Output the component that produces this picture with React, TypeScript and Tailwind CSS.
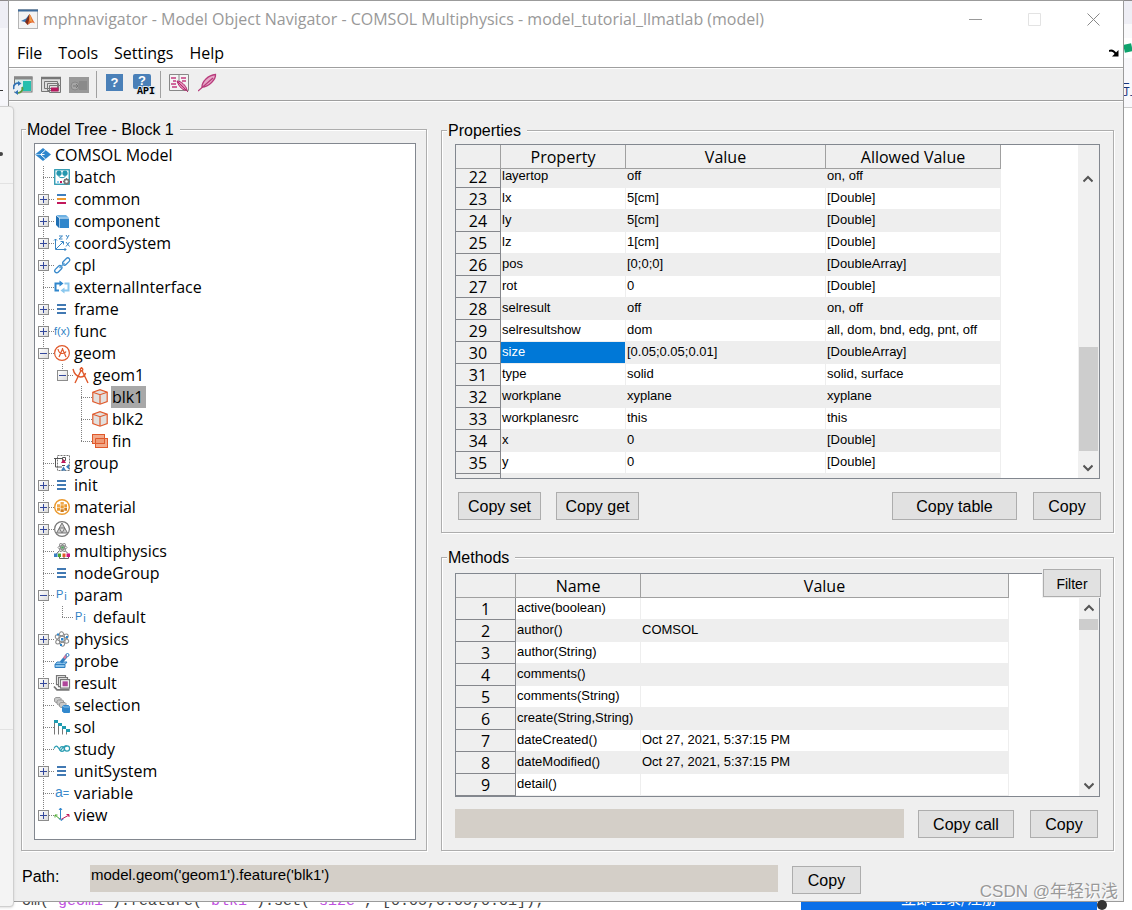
import React from 'react'

type NodeType = {
  name: string
  icon: string
  depth: number
  toggle?: 'plus' | 'minus'
  last?: boolean
  selected?: boolean
}

const tree: NodeType[] = [
  { name: 'batch', icon: 'batch', depth: 1 },
  { name: 'common', icon: 'common', depth: 1, toggle: 'plus' },
  { name: 'component', icon: 'component', depth: 1, toggle: 'plus' },
  { name: 'coordSystem', icon: 'coord', depth: 1, toggle: 'plus' },
  { name: 'cpl', icon: 'link', depth: 1, toggle: 'plus' },
  { name: 'externalInterface', icon: 'external', depth: 1 },
  { name: 'frame', icon: 'list', depth: 1, toggle: 'plus' },
  { name: 'func', icon: 'func', depth: 1, toggle: 'plus' },
  { name: 'geom', icon: 'geom', depth: 1, toggle: 'minus' },
  { name: 'geom1', icon: 'geom1', depth: 2, toggle: 'minus', last: true },
  { name: 'blk1', icon: 'block', depth: 3, selected: true },
  { name: 'blk2', icon: 'block', depth: 3 },
  { name: 'fin', icon: 'fin', depth: 3, last: true },
  { name: 'group', icon: 'group', depth: 1 },
  { name: 'init', icon: 'list', depth: 1, toggle: 'plus' },
  { name: 'material', icon: 'material', depth: 1, toggle: 'plus' },
  { name: 'mesh', icon: 'mesh', depth: 1, toggle: 'plus' },
  { name: 'multiphysics', icon: 'multi', depth: 1 },
  { name: 'nodeGroup', icon: 'list', depth: 1 },
  { name: 'param', icon: 'param', depth: 1, toggle: 'minus' },
  { name: 'default', icon: 'param', depth: 2, last: true },
  { name: 'physics', icon: 'physics', depth: 1, toggle: 'plus' },
  { name: 'probe', icon: 'probe', depth: 1 },
  { name: 'result', icon: 'result', depth: 1, toggle: 'plus' },
  { name: 'selection', icon: 'selection', depth: 1 },
  { name: 'sol', icon: 'sol', depth: 1 },
  { name: 'study', icon: 'study', depth: 1 },
  { name: 'unitSystem', icon: 'list', depth: 1, toggle: 'plus' },
  { name: 'variable', icon: 'variable', depth: 1 },
  { name: 'view', icon: 'view', depth: 1, toggle: 'plus', last: true },
]

const properties = [
  ['22', 'layertop', 'off', 'on, off'],
  ['23', 'lx', '5[cm]', '[Double]'],
  ['24', 'ly', '5[cm]', '[Double]'],
  ['25', 'lz', '1[cm]', '[Double]'],
  ['26', 'pos', '[0;0;0]', '[DoubleArray]'],
  ['27', 'rot', '0', '[Double]'],
  ['28', 'selresult', 'off', 'on, off'],
  ['29', 'selresultshow', 'dom', 'all, dom, bnd, edg, pnt, off'],
  ['30', 'size', '[0.05;0.05;0.01]', '[DoubleArray]'],
  ['31', 'type', 'solid', 'solid, surface'],
  ['32', 'workplane', 'xyplane', 'xyplane'],
  ['33', 'workplanesrc', 'this', 'this'],
  ['34', 'x', '0', '[Double]'],
  ['35', 'y', '0', '[Double]'],
]

const methods = [
  ['1', 'active(boolean)', ''],
  ['2', 'author()', 'COMSOL'],
  ['3', 'author(String)', ''],
  ['4', 'comments()', ''],
  ['5', 'comments(String)', ''],
  ['6', 'create(String,String)', ''],
  ['7', 'dateCreated()', 'Oct 27, 2021, 5:37:15 PM'],
  ['8', 'dateModified()', 'Oct 27, 2021, 5:37:15 PM'],
  ['9', 'detail()', ''],
]

const getNodeIcon = (icon: string) => {
  switch (icon) {
    case 'model':
      return (
        <>
          <path d="M0 7.500 8 1l8 6.500L8 14Z" fill="#2f86cc" />
          <path d="M10.500 3 5.500 7.500l5 4.500M5.500 7.500h4" stroke="#fff" fill="none" />
          <path d="M0 7.500h5" stroke="#9cc8ea" />
        </>
      )
    case 'batch':
      return (
        <>
          <rect x="0.750" y="0.750" width="14.500" height="14.500" fill="#fff" stroke="#2596ae" strokeWidth="1.300" />
          <circle cx="5" cy="4.200" r="2.600" fill="#2596ae" />
          <circle cx="11" cy="4.200" r="2.600" fill="#2596ae" />
          <path d="M5 6v1.500c0 1.500 6 1.500 6 0V6" fill="none" stroke="#2596ae" />
          <path d="M3 13h2" stroke="#8bc8ee" strokeWidth="2" />
          <path d="M6 13h2" stroke="#c2185b" strokeWidth="2" />
          <circle cx="12.500" cy="12.500" r="2.200" fill="#fff" stroke="#777" strokeWidth="1.800" />
          <path d="M12.500 9v1M12.500 15v1M9 12.500h1M15 12.500h1M10 10l1 1M14 14l1 1M15 10l-1 1M11 14l-1 1" stroke="#777" />
        </>
      )
    case 'common':
      return (
        <>
          <path d="M3 4h9" stroke="#3f7fbf" strokeWidth="2" />
          <path d="M3 8h9" stroke="#ee9a2e" strokeWidth="2" />
          <path d="M3 12h9" stroke="#c2185b" strokeWidth="2" />
        </>
      )
    case 'list':
      return <path d="M3 4h9M3 8h9M3 12h9" stroke="#4179b3" strokeWidth="2" />
    case 'component':
      return (
        <>
          <path d="M2 2.500 5 5v10L2 12Z" fill="#1e6fb4" />
          <path d="M5.500 5.500H15V15H5.500Z" fill="#3187cc" />
          <path d="M2.500 2h9.500l3 2.700H5.500Z" fill="#6eb2e4" />
        </>
      )
    case 'coord':
      return (
        <g fill="none" stroke="#3a86c4">
          <path d="M1.500 4v10.500H12M0 5.500 1.500 4 3 5.500M10.500 13l1.500 1.500-1.500 1.500M2 14 9 7M6.500 6.500h3v3" />
          <path d="M5 1h3.500L5 4h3.500M12 0l1.500 2.300M15 0l-2.500 4.500M12 7l3.500 4.500M15.500 7 12 11.500" />
        </g>
      )
    case 'link':
      return (
        <g fill="none" strokeWidth="1.300">
          <rect x="8" y="2.700" width="8.500" height="4" rx="2" transform="rotate(-45 12 4.700)" stroke="#3a8acb" />
          <rect x="0" y="10" width="8.500" height="4" rx="2" transform="rotate(-45 4.500 12)" stroke="#3a8acb" />
          <path d="m5.500 11 5-5" stroke="#5ea3d8" strokeWidth="1.500" />
        </g>
      )
    case 'external':
      return (
        <g fill="none" strokeWidth="2">
          <path d="M5 11.500H1.500v-7H6" stroke="#2f86cc" />
          <path d="M5.500 1.500v6l4-3Z" fill="#2f86cc" stroke="none" />
          <path d="M10.500 4.500h4v7H10" stroke="#8bc8ee" />
          <path d="M10.500 8.500v6l-4-3Z" fill="#8bc8ee" stroke="none" />
        </g>
      )
    case 'func':
      return <text x="0" y="12" fontSize="11" fill="#2f7fc4">f(x)</text>
    case 'geom':
      return (
        <g fill="none" stroke="#e0592b" strokeWidth="1.200">
          <circle cx="8" cy="8" r="7.400" />
          <path d="M8.500 4 5 12M8.500 4 12 12M4 4c.5 3 2.500 4.500 4.500 4.500S11.500 8 12 6.500M8.500 3v2" />
        </g>
      )
    case 'geom1':
      return (
        <g fill="none" stroke="#e0592b" strokeWidth="1.400">
          <path d="M8 3.500 2 16M9 3.500l6 12.500M0 2c1 4 3.500 7.500 7.500 8 3 0 4.500-1.500 5-4" />
          <circle cx="8.500" cy="2.500" r="1.300" />
          <path d="M8.500 0v1" />
        </g>
      )
    case 'block':
      return (
        <g fill="#e3e0de" stroke="#e0592b" strokeWidth="1.200">
          <path d="m.8 3.200 7.200-2.500 7.200 2.500v9.300L8 15.200l-7.200-2.700Z" />
          <path d="M.8 3.200 8 5.700l7.200-2.500M8 5.700v9.300" fill="none" />
        </g>
      )
    case 'fin':
      return (
        <g fill="#f2a98a" stroke="#e0592b">
          <rect x="3.500" y="5.500" width="12" height="9" />
          <rect x="0.500" y="1.500" width="12" height="9" />
          <path d="M3.500 5.500h9v5h-9Z" fill="#ee9a76" />
        </g>
      )
    case 'group':
      return (
        <g fill="none">
          <path d="M3.500 15.500V.5h12v15Z" stroke="#777" strokeDasharray="2 1" />
          <path d="M0 3.500h8M1.500 3.500v8.500H8M8.500 2.500h3v3h-3ZM8 10.500h3" stroke="#555" />
          <path d="m7 8 2.500-4L12 8Z" fill="#c2185b" />
          <path d="m7 15.500 2.500-4 2.500 4ZM15 9v5.500l-3-2.700Z" fill="#3a7fc0" />
        </g>
      )
    case 'material':
      return (
        <>
          <circle cx="8" cy="8" r="7.300" fill="#fff" stroke="#eb9a2f" strokeWidth="1.400" />
          <path d="M6.500 3h3.300v2.700H6.500ZM3 5.200h3v3H3Z" fill="#f1a94a" />
          <path d="M10.300 5.200H13v3h-2.700ZM6.500 6.300h3.300v3.200H6.500ZM3 8.800h3v3H3Z" fill="#eb9a2f" />
          <path d="M10.300 8.800H13v3h-2.700ZM6.500 10.200h3.300V13H6.500Z" fill="#cf7d1d" />
        </>
      )
    case 'mesh':
      return (
        <g fill="#c9c9c9" stroke="#777">
          <circle cx="8" cy="8" r="7.400" fill="#fff" strokeWidth="1.200" />
          <path d="M8 2 2.500 12h11Z" />
          <path d="M5.200 7h5.600L8 12Z" fill="#e4e4e4" />
        </g>
      )
    case 'multi':
      return (
        <g fill="none">
          <g stroke="#888">
            <ellipse cx="8.500" cy="4.500" rx="4.500" ry="1.800" />
            <ellipse cx="8.500" cy="4.500" rx="4.500" ry="1.800" transform="rotate(60 8.500 4.500)" />
            <ellipse cx="8.500" cy="4.500" rx="4.500" ry="1.800" transform="rotate(120 8.500 4.500)" />
          </g>
          <circle cx="8.500" cy="4.500" r="1.300" fill="#4aa15a" />
          <path d="M5.500 13v2.500h9V13M10 13v2.500M2 11.500 5 8M14 10.500 11.500 8" stroke="#666" />
          <path d="M0 10.500h3.500V14H0Z" fill="#3a7fc0" />
          <path d="M4 10.500h3V14H4Z" fill="#4aa82e" />
          <path d="M8.500 10.500h3V14h-3Z" fill="#e0592b" />
          <path d="M12.500 10.500H16V14h-3.500Z" fill="#d1177f" />
        </g>
      )
    case 'param':
      return <text x="2" y="11" fontSize="11" fill="#2f7fc4">P<tspan dy="2" dx="1">i</tspan></text>
    case 'physics':
      return (
        <g fill="none" stroke="#8a8a8a" strokeWidth="1.100">
          <ellipse cx="8" cy="8" rx="7.300" ry="2.800" transform="rotate(25 8 8)" />
          <ellipse cx="8" cy="8" rx="7.300" ry="2.800" transform="rotate(85 8 8)" />
          <ellipse cx="8" cy="8" rx="7.300" ry="2.800" transform="rotate(145 8 8)" />
          <path d="M7 7h2.500v2.500H7ZM3 2.500h2v2H3ZM12 5h2v2h-2ZM6 13h2v2H6Z" fill="#2a86d0" stroke="none" />
        </g>
      )
    case 'probe':
      return (
        <g stroke="#2f7fc1">
          <path d="M1 11.500 3 9h10l-2 2.500v3H1Z" fill="#8bc3ea" />
          <path d="M1 11.500h10" />
          <path d="M7 9.500 12.500 3" stroke="#2f7fc1" strokeWidth="3" />
          <path d="m10 5.500 3-4" stroke="#d97a9c" strokeWidth="2.500" />
          <circle cx="13.500" cy="2" r="1.500" fill="#fff" />
        </g>
      )
    case 'result':
      return (
        <g fill="#fff" stroke="#777" strokeWidth="1.200">
          <path d="M2.500.6h9v9h-9Z" />
          <path d="M4.500 2.600h9v9h-9Z" />
          <path d="M6.500 4.600h9v8.500h-9Z" />
          <path d="M8.500 6.300h5.300v5H8.500Z" fill="#b0459a" stroke="none" />
          <path d="M0 11.500 3 14.800h12.500" fill="none" strokeWidth="1.800" />
        </g>
      )
    case 'selection':
      return (
        <g fill="#c9c9c9" stroke="#999">
          <path d="M.5 1.500 2 .5h4l1 1v4h-5l-1.500-1Z" />
          <path d="m3 4 1.500-1h4l1 1v4h-5L3 7Z" />
          <path d="M5.500 6.500 7 5.500h4l1 1v4H7l-1.500-1Z" />
          <path d="m8.500 9.500 1.500-1h4.500l1 1v6H10l-1.500-1Z" fill="#3288cd" stroke="#3288cd" />
          <path d="m8.500 9 1.500 1h5.500" fill="none" stroke="#8bc3ea" />
        </g>
      )
    case 'sol':
      return (
        <>
          <path d="M.5 3v12.500M4.500 5v10.500M8.500 8v7.500M12.500 11v4.500" stroke="#777" />
          <path d="M0 1h4v3H0ZM4 4h4v3H4ZM8 7h4v3H8ZM12 10h4v3h-4Z" fill="#1f9bb0" />
        </>
      )
    case 'study':
      return (
        <g fill="none" stroke="#2a9db2" strokeWidth="1.200">
          <path d="M0 7.500c1.500-3 3-3 4.500-.5s2 3.500 3 1.500S12 3.500 13 5.500" />
          <circle cx="8" cy="8" r="2.300" />
          <circle cx="13" cy="7.500" r="2.600" />
        </g>
      )
    case 'variable':
      return <text x="1" y="12" fontSize="14" fill="#3a8acb">a<tspan fontSize="11">=</tspan></text>
    case 'view':
      return (
        <g fill="none">
          <path d="M6.500 1v11M5 3l1.500-2L8 3" stroke="#2f86cc" />
          <path d="M6.500 12.500 1 8M1 10.500V8h2.500" stroke="#4aa82e" />
          <path d="M7 12.500 15 8M12.500 7.500H15V10" stroke="#c2185b" />
          <path d="m5 11.500 2 2 2.500-1.500" stroke="#2f86cc" />
        </g>
      )
    default:
      return null
  }
}

const NodeIcon = ({ icon }: { icon: string }) => (
  <svg viewBox="0 0 16 16" className="h-4 w-4 shrink-0 overflow-visible font-['Liberation_Sans',sans-serif]">
    {getNodeIcon(icon)}
  </svg>
)

const Gutter = ({ node, level }: { node: NodeType; level: number }) => {
  const own = level === node.depth
  let line = ''
  if (own) {
    line = node.last ? 'M8.500 0V11' : 'M8.500 0V22'
  } else if (level === 1) {
    line = 'M8.500 0V22'
  }
  return (
    <span className="relative h-[22px] w-[19px] shrink-0">
      <svg viewBox="0 0 19 22" className="h-[22px] w-[19px]" fill="none" stroke="#808080" strokeDasharray="1 1">
        <path d={line} />
        {own && <path d="M8 11.500H19" />}
      </svg>
      {own && node.toggle && (
        <button
          aria-label={`Toggle ${node.name}`}
          className="absolute top-1.5 left-[3px] h-[11px] w-[11px] border border-[#8c8c8c] bg-linear-to-br from-white to-[#dcdcdc]"
        >
          <svg viewBox="0 0 9 9" className="block h-[9px] w-[9px]" stroke="#33489c">
            <path d="M1 4.500h7" />
            {node.toggle === 'plus' && <path d="M4.500 1v7" />}
          </svg>
        </button>
      )}
    </span>
  )
}

const TreeRow = ({ node }: { node: NodeType }) => (
  <li className="flex h-[22px] items-center">
    {Array.from({ length: node.depth }, (_, i) => (
      <Gutter key={i} node={node} level={i + 1} />
    ))}
    <NodeIcon icon={node.icon} />
    <span className={`ml-[3px] pr-[3px] pl-px leading-[22px] ${node.selected ? 'bg-[#a8a8a8]' : ''}`}>{node.name}</span>
  </li>
)

const Panel = ({ title, className, children }: { title: string; className: string; children: React.ReactNode }) => (
  <fieldset
    className={`min-w-0 border border-[#adadad] shadow-[1px_1px_0_white,inset_1px_1px_0_white] ${className}`}
  >
    <legend className="-ml-2 h-[18px] bg-[#efefef] pr-1.5 pl-px font-['Liberation_Sans',Arial,sans-serif] text-base leading-5">
      {title}
    </legend>
    {children}
  </fieldset>
)

const PushButton = ({ className, children }: { className: string; children: React.ReactNode }) => (
  <button
    className={`h-7 shrink-0 border border-[#adadad] bg-[#e1e1e1] pt-0.5 font-['Liberation_Sans',Arial,sans-serif] leading-6 ${className}`}
  >
    {children}
  </button>
)

const Arrow = ({ down }: { down?: boolean }) => (
  <button aria-label={down ? 'Scroll down' : 'Scroll up'} className="flex h-5 w-full items-center justify-center">
    <svg viewBox="0 0 10 8" className="h-2 w-2.5" fill="none" stroke="#555" strokeWidth="2">
      <path d={down ? 'm.5 1.500 4.500 4.500 4.500-4.500' : 'm.5 6.500 4.500-4.500 4.500 4.500'} />
    </svg>
  </button>
)

const headCell = 'h-6 border-r border-b border-[#a0a0a0] p-0 text-center text-base leading-[22px] font-normal'
const numberCell =
  'border-r border-b border-[#85878c] bg-[#efefef] p-0 pb-[3px] text-center align-bottom text-base leading-[14px] font-normal'
const cell =
  "border-r border-b border-[#eeeeee] p-0 pb-1 pl-px align-bottom font-['Liberation_Sans',Arial,sans-serif] text-[13px] leading-[14px] whitespace-nowrap"

const MatlabLogo = () => (
  <svg viewBox="0 0 20 20" className="h-5 w-5">
    <rect x="0.500" y="0.500" width="19" height="19" fill="#f4f4f4" stroke="#b5b5b5" />
    <path d="M0 1.500h20" stroke="#3d6a9a" strokeWidth="2" />
    <path d="m3 12 5-2.500L11.500 5 10 14l-3-1Z" fill="#3a78b5" />
    <path d="M11.500 5 7 13l2.500 3 3-2.500Z" fill="#7b2d1c" />
    <path d="M11.500 5c2 2 3 6 5.500 9.500-2-1.500-4-1.500-7.500 1.500L11 11Z" fill="#e2662a" />
    <path d="M11.500 5c1.500 2 2 5 3 8l-3-1Z" fill="#f0a04b" />
  </svg>
)

const Toolbar = () => (
  <div className="flex h-8 items-center border-t border-white pl-1">
    <button aria-label="Open" className="mr-2">
      <svg viewBox="0 0 20 20" className="h-5 w-5">
        <rect x="1.500" y="2" width="17.500" height="15" fill="#d8ecea" stroke="#777" />
        <path d="M1 3h18.500" stroke="#888" strokeWidth="3" />
        <rect x="10" y="6" width="8" height="10" fill="#25bfae" />
        <circle cx="5" cy="13" r="5" fill="#e9f0f5" />
        <path d="M1 14a4 4 0 0 1 5-5.500" fill="none" stroke="#3273b5" strokeWidth="1.800" />
        <path d="M9 12a4 4 0 0 1-5 5.500" fill="none" stroke="#5d9b3e" strokeWidth="1.800" />
        <path d="M5 6v5l3.500-2.500Z" fill="#3273b5" />
        <path d="M5 15v5l-3.500-2.500Z" fill="#3273b5" />
      </svg>
    </button>
    <button aria-label="Results" className="mr-2">
      <svg viewBox="0 0 20 20" className="h-5 w-5" fill="#dedede" stroke="#777">
        <path d="M.5 2.500h19v14H.5Z" />
        <path d="M0 3h20" strokeWidth="2.500" />
        <path d="M3.500 6.500h13v7h-13ZM6.500 8.500h11v7h-11ZM8.500 10.500h11v7h-11Z" />
        <path d="M10 12.500h7.500v4H10Z" fill="#b5185e" stroke="none" />
      </svg>
    </button>
    <button aria-label="Export" disabled className="mr-[7px]">
      <svg viewBox="0 0 20 20" className="h-5 w-5">
        <path d="M0 2h20v16H0Z" fill="#999" />
        <path d="M10 6h8v9h-8Z" fill="#8a8a8a" />
        <circle cx="6" cy="11" r="4" fill="#a6a6a6" stroke="#888" />
        <path d="M4 11h5M7 9l2 2-2 2" stroke="#777" fill="none" />
      </svg>
    </button>
    <span className="mr-[9px] h-[27px] w-px bg-[#a0a0a0]" />
    <button aria-label="Help" className="mr-2.5 -mt-1">
      <svg viewBox="0 0 17 17" className="block h-[17px] w-[17px]">
        <path d="M0 0h17v17H0Z" fill="#4a80b8" />
        <text x="4.500" y="13" fontSize="13" fontWeight="bold" fill="#fff" fontFamily="Liberation Sans">?</text>
      </svg>
    </button>
    <button aria-label="API help" className="-mt-0.5 mr-[7px]">
      <svg viewBox="0 0 20 20" className="block h-5 w-5 overflow-visible">
        <rect x="0" y="0" width="18" height="15" rx="2" fill="#4a80b8" />
        <text x="5" y="11" fontSize="13" fontWeight="bold" fill="#fff" fontFamily="Liberation Sans">?</text>
        <text x="4" y="20" fontSize="10" fontWeight="bold" fill="#000" stroke="#dde7f1" strokeWidth="2" paintOrder="stroke" fontFamily="Liberation Mono">API</text>
      </svg>
    </button>
    <span className="mr-2 h-[27px] w-px bg-[#a0a0a0]" />
    <button aria-label="Model notes" className="mr-[9px] -mt-1">
      <svg viewBox="0 0 20 20" className="block h-5 w-5" fill="none">
        <path d="M.5 1.500h19v16H.5Z" fill="#f4f4f4" stroke="#888" />
        <path d="M10 1.500v9" stroke="#888" />
        <path d="M2 5h5M4 8h3M2 11h5M3 14h5M12 5h5M13 8h4" stroke="#c43b7f" strokeWidth="1.500" />
        <path d="M8 8c4 0 9 4 10 9-4 1-8-3-10-9Z" fill="#e08bb4" stroke="#b42a70" />
        <path d="m8 8 11 11" stroke="#b42a70" />
      </svg>
    </button>
    <button aria-label="Feather" className="-mt-1">
      <svg viewBox="0 0 20 20" className="block h-5 w-5" fill="none" stroke="#b83c7c">
        <path d="M4 14C4 9 10 2 17.500 1.500 18 6 11 14 4 14Z" fill="#e8a8c8" strokeWidth="1.300" />
        <path d="M0 18 15 5" strokeWidth="1.300" />
      </svg>
    </button>
  </div>
)

const App: React.FC = () => {
  return (
    <div className="relative flex min-h-screen flex-col overflow-hidden bg-white font-['Open_Sans','Segoe_UI',sans-serif] text-base text-black">
      <div className="flex grow">
        <div className="flex w-2 shrink-0 flex-col bg-[#f7f7fb]">
          <div className="h-7 border-t border-[#8d8a8c] bg-[#eeeef5]" />
          <div className="mt-[62px] h-px w-[3px] bg-[#333]" />
        </div>

        <main className="flex min-w-0 grow flex-col border border-[#9b9b9b] bg-[#efefef]">
          <header className="border-b border-[#9f9f9f] bg-white">
            <div className="flex h-9 items-center pl-[9px]">
              <MatlabLogo />
              <h1 className="ml-[5px] grow truncate text-base leading-6 text-[#999]">
                mphnavigator - Model Object Navigator - COMSOL Multiphysics - model_tutorial_llmatlab (model)
              </h1>
              <div className="flex gap-[46px] pr-[23px]">
                <button aria-label="Minimize">
                  <svg viewBox="0 0 13 13" className="h-[13px] w-[13px]" stroke="#999">
                    <path d="M0 6.500h13" />
                  </svg>
                </button>
                <button aria-label="Maximize" disabled>
                  <svg viewBox="0 0 13 13" className="h-[13px] w-[13px]" fill="none" stroke="#e3e3e3">
                    <path d="M.5.5h12v12H.5Z" />
                  </svg>
                </button>
                <button aria-label="Close">
                  <svg viewBox="0 0 13 13" className="h-[13px] w-[13px]" stroke="#888">
                    <path d="m.5.5 12 12M12.500.5l-12 12" />
                  </svg>
                </button>
              </div>
            </div>
            <nav className="flex h-[30px] items-center gap-4 pt-px pr-1 pl-2 leading-6">
              <button>File</button>
              <button>Tools</button>
              <button>Settings</button>
              <button>Help</button>
              <button aria-label="Dock" className="ml-auto">
                <svg viewBox="0 0 10 8" className="h-2 w-2.5" fill="none" stroke="#000" strokeWidth="2">
                  <path d="M0 2c3-1.500 5 0 7 3" />
                  <path d="M9.500 1v6.500H3Z" fill="#000" stroke="none" />
                </svg>
              </button>
            </nav>
          </header>
          <div className="border-b border-[#9f9f9f]">
            <Toolbar />
          </div>

          <div className="flex grow flex-col border-t border-white pt-[18px] pr-[9px] pb-[7px] pl-3">
            <div className="flex grow gap-3.5">
              <Panel title="Model Tree - Block 1" className="flex w-[406px] shrink-0 flex-col pt-[5px] pr-2.5 pb-2.5 pl-3">
                <ul className="h-full border border-[#82878f] bg-white">
                  <li className="flex h-[22px] items-center">
                    <NodeIcon icon="model" />
                    <span className="ml-1 leading-[22px]">COMSOL Model</span>
                  </li>
                  {tree.map((node) => (
                    <TreeRow key={node.name} node={node} />
                  ))}
                </ul>
              </Panel>

              <div className="flex min-w-0 grow flex-col gap-[15px] pt-px">
                <Panel title="Properties" className="pt-[5px] pr-[13px] pb-3 pl-[13px]">
                  <div className="flex justify-between border border-[#82878f] bg-white">
                    <table className="w-[545px] table-fixed border-separate border-spacing-0">
                      <colgroup>
                        <col className="w-[45px]" />
                        <col className="w-[125px]" />
                        <col className="w-[200px]" />
                        <col className="w-[175px]" />
                      </colgroup>
                      <thead>
                        <tr className="bg-[#efefef]">
                          <th className={headCell} />
                          <th className={headCell}>Property</th>
                          <th className={headCell}>Value</th>
                          <th className={headCell}>Allowed Value</th>
                        </tr>
                      </thead>
                      <tbody>
                        {properties.map(([no, ...values], index) => (
                          <tr key={no} className={`${index === 0 ? 'h-[19px]' : 'h-[22px]'} even:bg-white odd:bg-[#eeeeee]`}>
                            <th className={numberCell}>{no}</th>
                            {values.map((value, i) => (
                              <td key={i} className={`${cell} ${value === 'size' ? 'bg-[#0078d7] text-white' : ''}`}>
                                {value}
                              </td>
                            ))}
                          </tr>
                        ))}
                        <tr className="h-1 bg-[#eeeeee]">
                          <th className="border-r border-[#85878c] p-0" />
                          <td colSpan={3} className="p-0" />
                        </tr>
                      </tbody>
                    </table>
                    <div className="flex w-[21px] flex-col border-r border-[#efefef] bg-[#f0f0f0] pt-6">
                      <Arrow />
                      <div className="grow" />
                      <div className="mb-[7px] ml-px h-[104px] bg-[#cdcdcd]" />
                      <Arrow down />
                    </div>
                  </div>
                  <div className="mt-[13px] -mr-px flex pl-[3px]">
                    <PushButton className="w-[83px]">Copy set</PushButton>
                    <PushButton className="ml-[15px] w-[83px]">Copy get</PushButton>
                    <PushButton className="mr-4 ml-auto w-[125px]">Copy table</PushButton>
                    <PushButton className="w-[68px]">Copy</PushButton>
                  </div>
                </Panel>

                <Panel title="Methods" className="pt-[7px] pr-[13px] pb-3 pl-[13px]">
                  <div className="relative flex justify-between border border-[#82878f] bg-white">
                    <table className="w-[553px] table-fixed border-separate border-spacing-0">
                      <colgroup>
                        <col className="w-[60px]" />
                        <col className="w-[125px]" />
                        <col className="w-[368px]" />
                      </colgroup>
                      <thead>
                        <tr className="bg-[#efefef]">
                          <th className={headCell} />
                          <th className={headCell}>Name</th>
                          <th className={headCell}>Value</th>
                        </tr>
                      </thead>
                      <tbody>
                        {methods.map(([no, name, value]) => (
                          <tr key={no} className="h-[22px] odd:bg-white even:bg-[#eeeeee]">
                            <th className={numberCell}>{no}</th>
                            <td className={cell}>{name}</td>
                            <td className={cell}>{value}</td>
                          </tr>
                        ))}
                      </tbody>
                    </table>
                    <PushButton className="absolute -top-[5px] -right-0.5 w-[58px] text-sm ring-1 ring-[#f0f0f0]">
                      Filter
                    </PushButton>
                    <div className="mt-6 flex w-5 flex-col bg-[#f0f0f0]">
                      <Arrow />
                      <div className="mt-px mr-px h-[11px] bg-[#cdcdcd]" />
                      <div className="grow" />
                      <Arrow down />
                    </div>
                  </div>
                  <div className="mt-3 mr-0.5 flex items-end">
                    <input
                      readOnly
                      aria-label="Method call"
                      className="h-[29px] min-w-0 grow bg-[#d4cfc8] font-['Liberation_Sans',Arial,sans-serif] text-sm"
                    />
                    <PushButton className="mr-4 ml-3.5 w-24">Copy call</PushButton>
                    <PushButton className="w-[68px]">Copy</PushButton>
                  </div>
                </Panel>
              </div>
            </div>

            <div className="mt-3.5 flex items-start font-['Liberation_Sans',Arial,sans-serif]">
              <label htmlFor="path" className="w-[69px] shrink-0 pl-px leading-6">
                Path:
              </label>
              <input
                id="path"
                readOnly
                value="model.geom('geom1').feature('blk1')"
                className="h-[27px] max-w-[688px] min-w-0 grow bg-[#d4cfc8] pb-2 pl-px text-[15px]"
              />
              <PushButton className="mt-px ml-3.5 w-[69px]">Copy</PushButton>
            </div>
          </div>
        </main>

        <div className="flex w-2 shrink-0 flex-col overflow-hidden bg-white">
          <div className="h-6 border-t border-[#8d8a8c] bg-[#eeeef5]" />
          <div className="h-3.5 bg-[#f9f9fb]" />
          <div className="flex h-5 items-center">
            <span className="h-2 w-full -rotate-12 bg-[#0fa36d]" />
          </div>
          <div className="h-[50px] border-b border-[#ccc] bg-[#f8f8fb] pt-5 text-sm whitespace-nowrap text-[#16337a]">
            <span className="-ml-2 font-['Noto_Sans_CJK_SC',sans-serif]">行_</span>
          </div>
        </div>
      </div>

      <footer className="flex h-2 items-end overflow-hidden pr-[35px] pl-[22px]">
        <code className="h-4 grow font-['Liberation_Mono',monospace] text-[15px] leading-4 whitespace-nowrap text-[#444]">
          om(<span className="text-[#c050e0]">'geom1'</span>).feature(<span className="text-[#c050e0]">'blk1'</span>
          ).set(<span className="text-[#c050e0]">'size'</span>, [0.05,0.05,0.01]);
        </code>
        <a
          href="#login"
          className="h-6 w-[296px] bg-[#0a6fe8] text-center font-['Noto_Sans_CJK_SC',sans-serif] text-[15px] leading-6 text-white"
        >
          立即登录/注册
        </a>
      </footer>

      <aside className="absolute top-[106px] -left-1 h-[801px] w-[18px] rounded-r-sm border border-[#cfcfcf] bg-[#f4f4f4] shadow-sm">
        <div className="mt-[45px] ml-0.5 h-1 w-1 rounded-full bg-[#444]" />
        <div className="mt-[27px] h-px bg-[#e2e2e2]" />
        <div className="mt-[545px] h-px bg-[#e2e2e2]" />
      </aside>

      <p className="absolute right-3.5 bottom-1 font-['Liberation_Sans','Noto_Sans_CJK_SC',sans-serif] text-[17px] leading-7 text-[#999] [text-shadow:1px_1px_0_white]">
        CSDN @年轻识浅
      </p>
      <span className="absolute right-[25px] bottom-0 h-2.5 w-2.5 rounded-full bg-[#333]" />
    </div>
  )
}

export default App
